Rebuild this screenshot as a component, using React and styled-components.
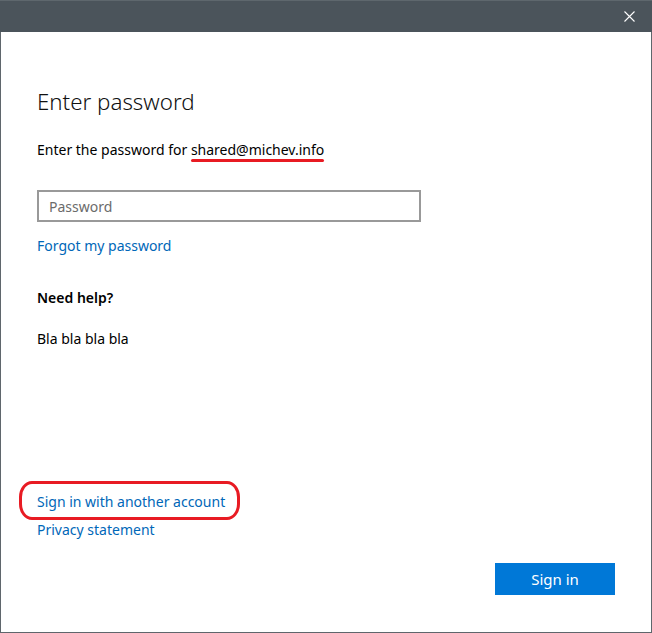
import React from "react";
import styled, { createGlobalStyle } from "styled-components";

const Global = createGlobalStyle`
  html, body { margin: 0; padding: 0; background: #fff; }
  body { font-family: "Noto Sans", "Open Sans", sans-serif; }
`;

const Window = styled.div`
  box-sizing: border-box;
  width: 652px;
  height: 633px;
  border: 1px solid #5f666c;
  border-top: none;
  display: flex;
  flex-direction: column;
  background: #fff;
`;

const TitleBar = styled.div`
  height: 32px;
  flex: none;
  background: #4b545b;
  border-top: 1px solid #5e676d;
  box-sizing: border-box;
  display: flex;
  justify-content: flex-end;
  align-items: center;
  margin: 0 -1px;
`;

const CloseButton = styled.button`
  width: 46px;
  height: 31px;
  border: none;
  background: transparent;
  display: flex;
  align-items: center;
  justify-content: center;
  padding: 0;
`;

const Content = styled.div`
  flex: 1;
  display: flex;
  flex-direction: column;
  padding: 56px 36px 37px 36px;
  color: #000;
`;

const Heading = styled.h1`
  margin: 0;
  font-weight: 300;
  font-size: 22.3px;
  line-height: 28px;
  color: #111;
`;

const Text = styled.p`
  margin: ${(p) => p.$mt || 0}px 0 0 0;
  font-size: 14px;
  line-height: 20px;
  font-weight: ${(p) => (p.$bold ? 600 : 400)};
`;

const Marked = styled.span`
  position: relative;
  &::after {
    content: "";
    position: absolute;
    left: 0;
    right: 0;
    bottom: -3px;
    height: 3px;
    border-radius: 2px;
    background: #e81b23;
  }
`;

const Input = styled.input`
  box-sizing: border-box;
  margin-top: 30px;
  width: 384px;
  height: 32px;
  border: 2px solid #999;
  padding: 0 10px;
  font-family: inherit;
  font-size: 14px;
  outline: none;
  &::placeholder { color: #6b6b6b; }
`;

const Link = styled.a`
  display: inline-block;
  margin-top: ${(p) => p.$mt || 0}px;
  font-size: 14px;
  line-height: 20px;
  color: #0067b8;
  text-decoration: none;
  align-self: flex-start;
  position: relative;
`;

const Circled = styled(Link)`
  &::before {
    content: "";
    position: absolute;
    left: -18px;
    right: -15px;
    top: -11px;
    bottom: -8px;
    border: 3.5px solid #e81b23;
    border-radius: 13px / 16px;
  }
`;

const Bottom = styled.div`
  margin-top: auto;
  display: flex;
  flex-direction: column;
`;

const Footer = styled.div`
  display: flex;
  justify-content: flex-end;
  margin-top: 23px;
`;

const PrimaryButton = styled.button`
  width: 120px;
  height: 32px;
  border: none;
  background: #0078d7;
  color: #fff;
  font-family: inherit;
  font-size: 15px;
  margin-right: 0;
`;

export default function App() {
  return (
    <>
      <Global />
      <Window>
        <TitleBar>
          <CloseButton aria-label="Close">
            <svg width="11" height="11" viewBox="0 0 11 11">
              <path d="M0.5 0.5 L10.5 10.5 M10.5 0.5 L0.5 10.5" stroke="#fff" strokeWidth="1.1" />
            </svg>
          </CloseButton>
        </TitleBar>
        <Content>
          <Heading>Enter password</Heading>
          <Text $mt={24}>
            Enter the password for <Marked>shared@michev.info</Marked>
          </Text>
          <Input placeholder="Password" type="password" />
          <Link href="#" $mt={14}>Forgot my password</Link>
          <Text $bold $mt={32}>Need help?</Text>
          <Text $mt={21}>Bla bla bla bla</Text>
          <Bottom>
            <Circled href="#">Sign in with another account</Circled>
            <Link href="#" $mt={8}>Privacy statement</Link>
            <Footer>
              <PrimaryButton>Sign in</PrimaryButton>
            </Footer>
          </Bottom>
        </Content>
      </Window>
    </>
  );
}
